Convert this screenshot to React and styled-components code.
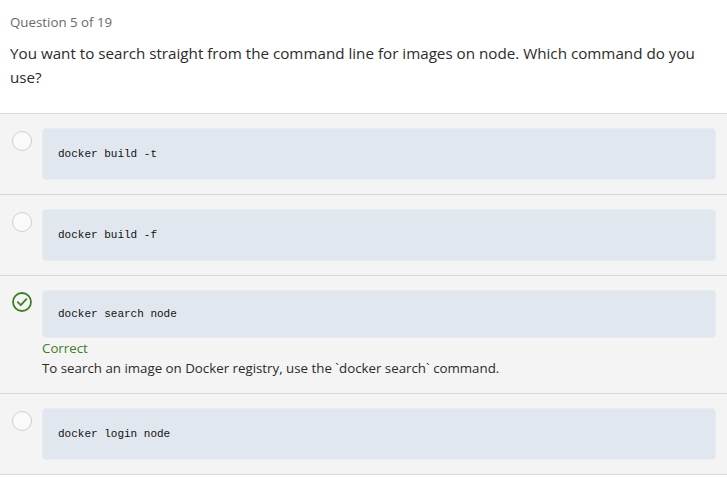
import React from "react";
import styled, { createGlobalStyle } from "styled-components";

const Global = createGlobalStyle`
  html, body { margin: 0; padding: 0; background: #ffffff; }
  body { font-family: "Open Sans", "Noto Sans", sans-serif; color: #333; }
`;

const Page = styled.div`
  width: 727px;
`;

const Header = styled.div`
  padding: 12px 10px 0 10px;
`;

const Counter = styled.div`
  font-size: 13.3px;
  line-height: 20px;
  color: #6a6a6a;
`;

const QuestionText = styled.div`
  margin-top: 9px;
  padding-right: 10px;
  font-size: 15.2px;
  line-height: 24px;
  color: #2b2b2b;
  padding-bottom: 24px;
`;

const Options = styled.div`
  border-top: 1px solid #d7d7d7;
`;

const Row = styled.div`
  display: flex;
  align-items: flex-start;
  gap: 10px;
  padding: 14px 11px 14px 12px;
  background: #f4f4f4;
  border-bottom: 1px solid #d7d7d7;
`;

const Radio = styled.span`
  flex: none;
  width: 20px;
  height: 20px;
  box-sizing: border-box;
  margin-top: 3px;
  border-radius: 50%;
  border: 1px solid #cfcfcf;
  background: #fafafa;
`;

const CheckWrap = styled.span`
  flex: none;
  width: 20px;
  height: 20px;
  margin-top: 2px;
  display: block;
`;

const Body = styled.div`
  flex: 1;
  min-width: 0;
`;

const CodeBox = styled.div`
  height: ${(p) => p.$h || 52}px;
  box-sizing: border-box;
  display: flex;
  align-items: center;
  padding: 0 15px;
  background: #e1e7ee;
  border: 1px solid #e8ecf1;
  border-radius: 4px;
  font-family: "Liberation Mono", "DejaVu Sans Mono", monospace;
  font-size: 11px;
  color: #111;
  white-space: pre;
`;

const Feedback = styled.div`
  margin-top: 0;
  font-size: 13.3px;
  line-height: 20px;
  padding-bottom: 1px;
`;

const Verdict = styled.div`
  color: #3f7d26;
`;

const Explain = styled.div`
  color: #2b2b2b;
`;

const Check = () => (
  <CheckWrap>
    <svg width="20" height="20" viewBox="0 0 20 20">
      <circle cx="10" cy="10" r="9" fill="none" stroke="#3f7d26" strokeWidth="1.8" />
      <path d="M5.8 10.2 L8.8 13.2 L14.3 7.2" fill="none" stroke="#3f7d26" strokeWidth="1.8" strokeLinecap="round" strokeLinejoin="round" />
    </svg>
  </CheckWrap>
);

const options = [
  { code: "docker build -t" },
  { code: "docker build -f" },
  {
    code: "docker search node",
    correct: true,
    explain: "To search an image on Docker registry, use the `docker search` command.",
  },
  { code: "docker login node" },
];

export default function App() {
  return (
    <Page>
      <Global />
      <Header>
        <Counter>Question 5 of 19</Counter>
        <QuestionText>
          You want to search straight from the command line for images on node. Which command do you use?
        </QuestionText>
      </Header>
      <Options>
        {options.map((o) => (
          <Row key={o.code}>
            {o.correct ? <Check /> : <Radio />}
            <Body>
              <CodeBox $h={o.correct ? 48 : 52}>{o.code}</CodeBox>
              {o.correct && (
                <Feedback>
                  <Verdict>Correct</Verdict>
                  <Explain>{o.explain}</Explain>
                </Feedback>
              )}
            </Body>
          </Row>
        ))}
      </Options>
    </Page>
  );
}
